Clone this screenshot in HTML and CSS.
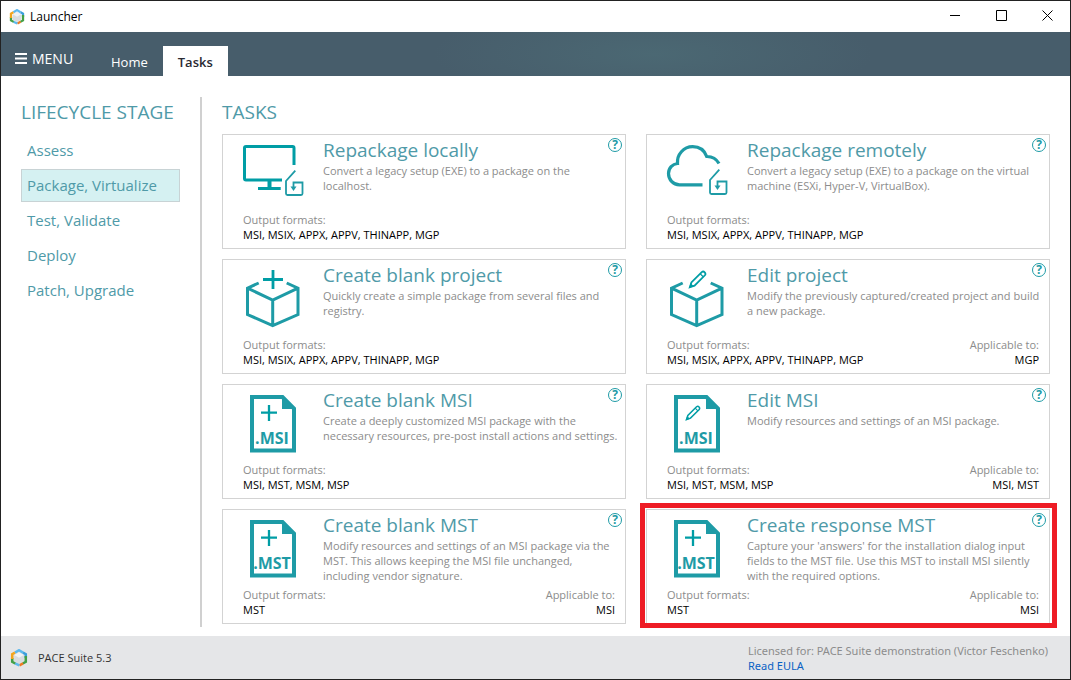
FILE: index.html
```html
<!DOCTYPE html>
<html lang="en">
<head>
<meta charset="utf-8">
<title>Launcher</title>
<link rel="stylesheet" href="styles.css">
</head>
<body>
<svg class="defs" aria-hidden="true">
  <symbol id="logo" viewBox="1 0.5 16 17">
    <path d="M9 3.6 13.6 6.2V11.8L9 14.4 4.4 11.8V6.2z" fill="#d9dcdf"/>
    <path d="M9 3.6 13.6 6.2 9 8.8 4.4 6.2z" fill="#f1f2f3"/>
    <g fill="none" stroke-width="2.4">
      <path d="M5.2 3.9 9 1.7l3.8 2.2" stroke="#5db9ee"/>
      <path d="M12.8 3.9 15.4 5.4V9" stroke="#3a9edb"/>
      <path d="M15.4 7V12.6L12.6 14.2" stroke="#43a047"/>
      <path d="M12.8 14.1 9.4 16" stroke="#ee7b22"/>
      <path d="M9.4 16 5.2 14.1" stroke="#5db9ee"/>
      <path d="M5.4 14.2 2.6 12.6V9" stroke="#43a047"/>
      <path d="M2.6 10V5.4L5.2 3.9" stroke="#f2a51f"/>
    </g>
  </symbol>
  <symbol id="parcel" viewBox="0 0 62 62">
    <path d="M53.3 26.7 44 37V49.5q0 1.5 1.5 1.5H59q1.5 0 1.5-1.5V38.5H51.5V43" fill="none" stroke="#1e9ba6" stroke-width="1.8"/>
    <path d="M48.5 42.5h6L51.5 47z" fill="#1e9ba6"/>
  </symbol>
  <symbol id="monitor" viewBox="0 0 62 62">
    <path d="M52 21V4q0-1.5-1.5-1.5H4Q2.5 2.500 2.500 4V34.500Q2.500 36 4 36H40" fill="none" stroke="#009da5" stroke-width="3"/>
    <path d="M25.500 37h4v6h9.200v3H16v-3h9.500z" fill="#009da5"/>
    <use href="#parcel"/>
  </symbol>
  <symbol id="cloud" viewBox="0 0 62 62">
    <path d="M36.500 40.800H13.500C7 40.800 2.500 35.500 2.500 29.500 2.500 24 6.500 20 11.500 19.500 10.800 10.500 17.500 2.700 26.700 2.700 33.500 2.700 38.500 6.600 40.700 12.500 46.500 12.400 50.500 15 53 19.600" fill="none" stroke="#1e9ba6" stroke-width="3.200"/>
    <use href="#parcel" y="-1"/>
  </symbol>
  <symbol id="cube" viewBox="0 0 62 62">
    <path d="M16.700 14 5.500 19.200V45.500L30.700 56.600 56 45.500V19.200L44.700 14M5.500 19.200 30.700 31 56 19.200M30.700 31V56" fill="none" stroke="#1e9ba6" stroke-width="3"/>
  </symbol>
  <symbol id="pencil" viewBox="0 0 18 18">
    <path d="M1.800 16.300 3.200 11.800 13 2q1.500-1.200 2.800.200t.200 2.800L6.200 14.800z" fill="none" stroke="#009da5" stroke-width="1.700"/>
    <path d="M11.500 3.500 14.500 6.500" stroke="#009da5" stroke-width="1.200"/>
    <path d="M.5 17.500 2.500 12.500 5.500 15.500z" fill="#009da5"/>
  </symbol>
  <symbol id="cube-plus" viewBox="0 0 62 62">
    <use href="#cube"/>
    <path d="M21 10.500H41M31 1V20" stroke="#009da5" stroke-width="2.800"/>
  </symbol>
  <symbol id="cube-edit" viewBox="0 0 62 62">
    <use href="#cube"/>
    <use href="#pencil" x="22" y="1" width="19" height="19"/>
  </symbol>
  <symbol id="doc" viewBox="0 0 62 62">
    <path d="M10 3H40.500L52 14.500V56.500H10z" fill="none" stroke="#1e9ba6" stroke-width="4"/>
    <path d="M40 1 54 15H40z" fill="#1e9ba6"/>
  </symbol>
  <symbol id="doc-plus" viewBox="0 0 62 62">
    <use href="#doc"/>
    <path d="M19 18.700H35M27 11V27" stroke="#009da5" stroke-width="2.300"/>
  </symbol>
  <symbol id="doc-edit" viewBox="0 0 62 62">
    <use href="#doc"/>
    <use href="#pencil" x="19" y="11" width="16" height="16"/>
  </symbol>
</svg>

<div class="window">
  <header class="titlebar">
    <svg class="titlebar-logo"><use href="#logo"/></svg>
    <h1 class="titlebar-name">Launcher</h1>
    <div class="controls">
      <button class="control" aria-label="Minimize"><svg viewBox="0 0 11 11"><path d="M0 5.500H10"/></svg></button>
      <button class="control" aria-label="Maximize"><svg viewBox="0 0 11 11"><path d="M.5.5H10.500V10.500H.5z"/></svg></button>
      <button class="control" aria-label="Close"><svg viewBox="0 0 11 11"><path d="M.5.5 10.500 10.500M10.500.5.5 10.500"/></svg></button>
    </div>
  </header>

  <nav class="ribbon">
    <button class="menu"><svg class="menu-icon" viewBox="0 0 12 11"><path d="M0 1H12M0 5.500H12M0 10H12"/></svg>MENU</button>
    <a class="tab" href="#home">Home</a>
    <a class="tab tab-active" href="#tasks" aria-current="page">Tasks</a>
  </nav>

  <main class="content">
    <aside class="sidebar">
      <h2 class="heading">LIFECYCLE STAGE</h2>
      <nav class="stages">
        <a class="stage" href="#assess">Assess</a>
        <a class="stage stage-active" href="#package" aria-current="true">Package, Virtualize</a>
        <a class="stage" href="#test">Test, Validate</a>
        <a class="stage" href="#deploy">Deploy</a>
        <a class="stage" href="#patch">Patch, Upgrade</a>
      </nav>
    </aside>

    <section class="tasks">
      <h2 class="heading">TASKS</h2>
      <div class="cards">
        <article class="card">
          <svg class="card-icon"><use href="#monitor"/></svg>
          <div class="card-text"><h3 class="card-title">Repackage locally</h3>
            <p class="card-desc">Convert a legacy setup (EXE) to a package on the<br>localhost.</p></div>
          <dl class="facts"><div><dt>Output formats:</dt><dd>MSI, MSIX, APPX, APPV, THINAPP, MGP</dd></div></dl>
          <button class="help" aria-label="Help: Repackage locally">?</button>
        </article>
        <article class="card">
          <svg class="card-icon"><use href="#cloud"/></svg>
          <div class="card-text"><h3 class="card-title">Repackage remotely</h3>
            <p class="card-desc">Convert a legacy setup (EXE) to a package on the virtual<br>machine (ESXi, Hyper-V, VirtualBox).</p></div>
          <dl class="facts"><div><dt>Output formats:</dt><dd>MSI, MSIX, APPX, APPV, THINAPP, MGP</dd></div></dl>
          <button class="help" aria-label="Help: Repackage remotely">?</button>
        </article>
        <article class="card">
          <svg class="card-icon"><use href="#cube-plus"/></svg>
          <div class="card-text"><h3 class="card-title">Create blank project</h3>
            <p class="card-desc">Quickly create a simple package from several files and<br>registry.</p></div>
          <dl class="facts"><div><dt>Output formats:</dt><dd>MSI, MSIX, APPX, APPV, THINAPP, MGP</dd></div></dl>
          <button class="help" aria-label="Help: Create blank project">?</button>
        </article>
        <article class="card">
          <svg class="card-icon"><use href="#cube-edit"/></svg>
          <div class="card-text"><h3 class="card-title">Edit project</h3>
            <p class="card-desc">Modify the previously captured/created project and build<br>a new package.</p></div>
          <dl class="facts"><div><dt>Output formats:</dt><dd>MSI, MSIX, APPX, APPV, THINAPP, MGP</dd></div><div class="applies"><dt>Applicable to:</dt><dd>MGP</dd></div></dl>
          <button class="help" aria-label="Help: Edit project">?</button>
        </article>
        <article class="card">
          <svg class="card-icon"><use href="#doc-plus"/><text class="ext" x="30" y="50">.MSI</text></svg>
          <div class="card-text"><h3 class="card-title">Create blank MSI</h3>
            <p class="card-desc">Create a deeply customized MSI package with the<br>necessary resources, pre-post install actions and settings.</p></div>
          <dl class="facts"><div><dt>Output formats:</dt><dd>MSI, MST, MSM, MSP</dd></div></dl>
          <button class="help" aria-label="Help: Create blank MSI">?</button>
        </article>
        <article class="card">
          <svg class="card-icon"><use href="#doc-edit"/><text class="ext" x="30" y="50">.MSI</text></svg>
          <div class="card-text"><h3 class="card-title">Edit MSI</h3>
            <p class="card-desc">Modify resources and settings of an MSI package.</p></div>
          <dl class="facts"><div><dt>Output formats:</dt><dd>MSI, MST, MSM, MSP</dd></div><div class="applies"><dt>Applicable to:</dt><dd>MSI, MST</dd></div></dl>
          <button class="help" aria-label="Help: Edit MSI">?</button>
        </article>
        <article class="card">
          <svg class="card-icon"><use href="#doc-plus"/><text class="ext" x="30" y="50">.MST</text></svg>
          <div class="card-text"><h3 class="card-title">Create blank MST</h3>
            <p class="card-desc">Modify resources and settings of an MSI package via the<br>MST. This allows keeping the MSI file unchanged,<br>including vendor signature.</p></div>
          <dl class="facts"><div><dt>Output formats:</dt><dd>MST</dd></div><div class="applies"><dt>Applicable to:</dt><dd>MSI</dd></div></dl>
          <button class="help" aria-label="Help: Create blank MST">?</button>
        </article>
        <article class="card card-marked">
          <svg class="card-icon"><use href="#doc-plus"/><text class="ext" x="30" y="50">.MST</text></svg>
          <div class="card-text"><h3 class="card-title">Create response MST</h3>
            <p class="card-desc">Capture your 'answers' for the installation dialog input<br>fields to the MST file. Use this MST to install MSI silently<br>with the required options.</p></div>
          <dl class="facts"><div><dt>Output formats:</dt><dd>MST</dd></div><div class="applies"><dt>Applicable to:</dt><dd>MSI</dd></div></dl>
          <button class="help" aria-label="Help: Create response MST">?</button>
        </article>
      </div>
    </section>
  </main>

  <footer class="footer">
    <svg class="footer-logo"><use href="#logo"/></svg>
    <span class="version">PACE Suite 5.3</span>
    <div class="license">
      <p class="licensee">Licensed for: PACE Suite demonstration (Victor Feschenko)</p>
      <a class="eula" href="#eula">Read EULA</a>
    </div>
  </footer>
</div>
</body>
</html>
```
FILE: styles.css
```css
* { box-sizing: border-box; }
body, h1, h2, h3, p, dl, dd { margin: 0; font-weight: 400; }
body { font-family: "Open Sans", "Noto Sans", sans-serif; font-size: 12px; background: #fff; }
button { font: inherit; border: 0; padding: 0; background: none; }
a { text-decoration: none; }
svg { display: block; flex: none; }
.defs { position: absolute; width: 0; height: 0; }

.window { display: flex; flex-direction: column; min-height: 100vh; border: 1px solid #222; }

.titlebar { display: flex; align-items: center; height: 31px; padding-left: 8px; }
.titlebar-logo { width: 16px; height: 16px; }
.titlebar-name { margin-left: 5px; font-size: 12px; line-height: 16px; color: #000; }
.controls { display: flex; margin-left: auto; padding-bottom: 2px; }
.control { display: grid; place-items: center; width: 46px; height: 29px; }
.control svg { width: 11px; height: 11px; fill: none; stroke: #000; stroke-width: 1; }

.ribbon {
  display: flex; align-items: flex-end; height: 44px; padding-left: 14px; color: #fff;
  background: radial-gradient(ellipse 220px 50px at 61% 50%, #4b6873, #475d6b);
}
.menu { display: flex; align-items: center; width: 81px; height: 35px; gap: 5px; font-size: 14px; color: #fff; }
.menu-icon { width: 12px; height: 11px; stroke: #fff; stroke-width: 2; }
.tab { height: 30px; padding: 0 15px; font-size: 13px; line-height: 32px; color: #fff; }
.tab-active { font-weight: 600; color: #2a2a32; background: #fff; }

.content { display: flex; flex: 1; padding: 21px 20px 9px; }
.sidebar { flex: none; width: 181px; padding-right: 20px; border-right: 2px solid #d0d0d0; }
.heading { font-size: 19px; line-height: 30px; color: #4f9aa8; white-space: nowrap; }
.stages { display: flex; flex-direction: column; gap: 2px; padding-top: 7px; }
.stage { padding: 0 5px; border: 1px solid transparent; font-size: 15px; line-height: 31px; color: #4f9aa8; }
.stage-active { border-color: #c8d3d5; background: #d5f1f2; }

.tasks { flex: 1; min-width: 0; padding-left: 20px; }
.cards { display: grid; grid-template-columns: repeat(2, minmax(0, 1fr)); gap: 10px 20px; padding: 7px 0 3px; }
.card {
  position: relative; display: grid; grid-template-columns: 62px minmax(0, 1fr); grid-template-rows: 1fr auto;
  column-gap: 19px; min-height: 115px; padding: 3px 10px 6px 19px; border: 1px solid #d3d3d3;
}
.card-icon { width: 62px; height: 62px; margin-top: 6px; }
.ext { font-size: 16px; font-weight: 700; fill: #1e9ba6; text-anchor: middle; }
.card-title { font-size: 19px; line-height: 25px; color: #4f9aa8; }
.card-desc { font-size: 11px; font-weight: 500; line-height: 15px; color: #8c8c8c; white-space: nowrap; }
.facts {
  display: flex; justify-content: space-between; grid-column: 1 / -1; padding-left: 1px;
  font-size: 11px; line-height: 15px;
}
.facts dt { font-weight: 500; color: #8c8c8c; }
.facts dd { font-weight: 500; color: #000; }
.applies { text-align: right; }
.help {
  position: absolute; top: 3px; right: 3px; width: 14px; height: 14px; border: 1px solid #1e9ba6;
  border-radius: 50%; font-size: 12px; font-weight: 700; line-height: 12px; color: #1e9ba6;
}
.card-marked::after {
  content: ""; position: absolute; inset: -7px -8px -5px -7px; border: 5px solid #ee1c25; pointer-events: none;
}

.footer { display: flex; align-items: center; min-height: 43px; padding: 0 22px 0 9px; background: #e5e6e8; }
.footer-logo { width: 18px; height: 18px; }
.version { margin-left: 10px; font-size: 11px; color: #333; }
.license { margin-left: auto; font-family: "Noto Sans", "Open Sans", sans-serif; font-size: 11px; line-height: 15px; }
.licensee { color: #8c8c8c; }
.eula { color: #0a62c4; }
```
